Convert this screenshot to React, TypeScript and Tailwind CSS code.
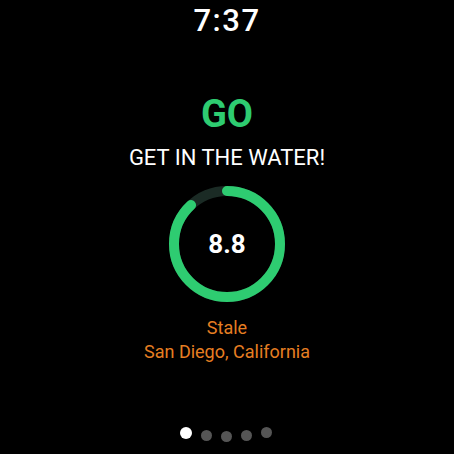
import React from "react";

export default function App() {
  const r = 53;
  const c = 2 * Math.PI * r;
  const pct = 0.88;
  return (
    <div
      className="w-[454px] h-[454px] bg-black flex flex-col items-center overflow-hidden"
      style={{ fontFamily: "Roboto, 'Noto Sans', sans-serif" }}
    >
      <div className="mt-[3px] text-[31px] leading-[36px] font-medium text-white tracking-[1.5px]">7:37</div>
      <div className="mt-[56px] text-[38px] leading-[38px] font-bold text-[#2ecc71]">GO</div>
      <div className="mt-[13px] text-[22px] leading-[24px] text-white">GET IN THE WATER!</div>
      <div className="mt-[15px] relative w-[118px] h-[118px]">
        <svg width="118" height="118" viewBox="0 0 118 118" className="absolute inset-0">
          <circle cx="59" cy="59" r={r} fill="none" stroke="#1b2b25" strokeWidth="10" />
          <circle
            cx="59"
            cy="59"
            r={r}
            fill="none"
            stroke="#2ecc71"
            strokeWidth="10"
            strokeLinecap="round"
            strokeDasharray={`${c * pct} ${c}`}
            transform="rotate(-90 59 59)"
          />
        </svg>
        <div className="absolute inset-0 flex items-center justify-center text-[26px] font-bold text-white">8.8</div>
      </div>
      <div className="mt-[13px] flex flex-col items-center text-[18px] leading-[24px] text-[#e67e22]">
        <div>Stale</div>
        <div>San Diego, California</div>
      </div>
      <div className="mt-[63px] flex items-start gap-[9px] -translate-x-[1px]">
        <div className="w-[12px] h-[12px] rounded-full bg-white mt-[0px]" />
        <div className="w-[11px] h-[11px] rounded-full bg-[#555555] mt-[3px]" />
        <div className="w-[11px] h-[11px] rounded-full bg-[#555555] mt-[4px]" />
        <div className="w-[11px] h-[11px] rounded-full bg-[#555555] mt-[3px]" />
        <div className="w-[11px] h-[11px] rounded-full bg-[#555555] mt-[0px]" />
      </div>
    </div>
  );
}
